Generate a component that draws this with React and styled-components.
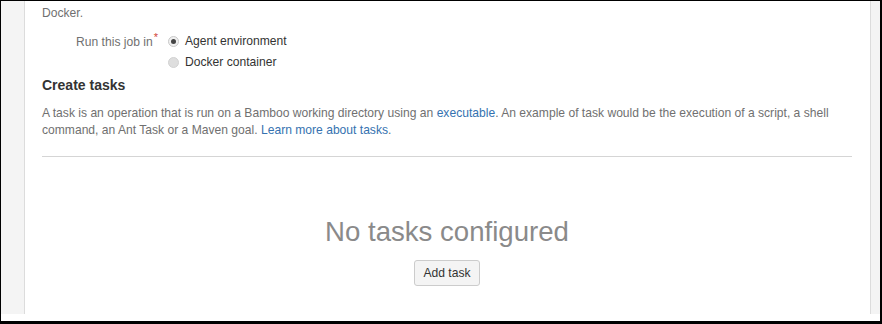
import React from "react";
import styled, { createGlobalStyle } from "styled-components";

const Global = createGlobalStyle`
  html, body { margin: 0; padding: 0; background: #000; }
  body { font-family: "Liberation Sans", Arial, sans-serif; }
  * { box-sizing: border-box; }
`;

const Frame = styled.div`
  width: 882px;
  height: 324px;
  border-style: solid;
  border-color: #000;
  border-width: 1px 2px 3px 1px;
  background: #fff;
  overflow: hidden;
`;

const Columns = styled.div`
  display: flex;
  height: 313px;
`;

const Side = styled.div`
  flex: 0 0 ${(p) => p.$w}px;
  background: #f4f4f4;
  ${(p) => (p.$right ? "border-left" : "border-right")}: 1px solid #dcdcdc;
`;

const Main = styled.main`
  flex: 1;
  padding: 0 18px 0 17px;
  color: #707070;
  font-size: 12.1px;
  line-height: 17.5px;
`;

const Intro = styled.p`
  margin: 4px 0 0;
`;

const FieldGroup = styled.div`
  display: grid;
  grid-template-columns: 116px 1fr;
  column-gap: 10px;
  margin-top: 9px;
`;

const Label = styled.div`
  text-align: right;
  padding-top: 2px;
`;

const Req = styled.span`
  color: #d04437;
  font-size: 11px;
  position: relative;
  top: -5px;
  margin-left: 1px;
`;

const Options = styled.div`
  display: flex;
  flex-direction: column;
  gap: 4px;
  padding-top: 1px;
`;

const Option = styled.label`
  display: flex;
  align-items: center;
  gap: 6px;
  color: #333;
  height: 17.5px;
`;

const Radio = styled.span`
  width: 11px;
  height: 11px;
  border-radius: 50%;
  background: ${(p) => (p.$checked ? "#f0f0f0" : "#dedede")};
  border: 1px solid ${(p) => (p.$checked ? "#c8c8c8" : "#d2d2d2")};
  display: flex;
  align-items: center;
  justify-content: center;
  &::after {
    content: "";
    width: 5px;
    height: 5px;
    border-radius: 50%;
    background: ${(p) => (p.$checked ? "#444" : "transparent")};
  }
`;

const Heading = styled.h3`
  margin: 3px 0 0;
  font-size: 14px;
  line-height: 20px;
  font-weight: bold;
  color: #333;
`;

const Para = styled.p`
  margin: 10px 0 0;
`;

const Link = styled.a`
  color: #3572b0;
  text-decoration: none;
`;

const Rule = styled.hr`
  border: 0;
  border-top: 1px solid #d5d5d5;
  margin: 16px 0 0;
`;

const Empty = styled.div`
  display: flex;
  flex-direction: column;
  align-items: center;
  padding-top: 58px;
`;

const EmptyTitle = styled.h2`
  margin: 0;
  font-size: 27.6px;
  line-height: 34px;
  font-weight: normal;
  color: #8a8a8a;
`;

const Button = styled.button`
  margin-top: 11px;
  height: 26px;
  padding: 0 8px;
  font-family: inherit;
  font-size: 12.1px;
  color: #333;
  background: #f4f4f4;
  border: 1px solid #cccccc;
  border-radius: 3px;
`;

export default function App() {
  return (
    <>
      <Global />
      <Frame>
        <Columns>
          <Side $w={24} />
          <Main>
            <Intro>Docker.</Intro>
            <FieldGroup>
              <Label>
                Run this job in<Req>*</Req>
              </Label>
              <Options>
                <Option>
                  <Radio $checked />
                  Agent environment
                </Option>
                <Option>
                  <Radio />
                  Docker container
                </Option>
              </Options>
            </FieldGroup>
            <Heading>Create tasks</Heading>
            <Para>
              A task is an operation that is run on a Bamboo working directory using an{" "}
              <Link href="#">executable</Link>. An example of task would be the execution of a
              script, a shell command, an Ant Task or a Maven goal.{" "}
              <Link href="#">Learn more about tasks</Link>.
            </Para>
            <Rule />
            <Empty>
              <EmptyTitle>No tasks configured</EmptyTitle>
              <Button>Add task</Button>
            </Empty>
          </Main>
          <Side $w={10} $right />
        </Columns>
      </Frame>
    </>
  );
}
